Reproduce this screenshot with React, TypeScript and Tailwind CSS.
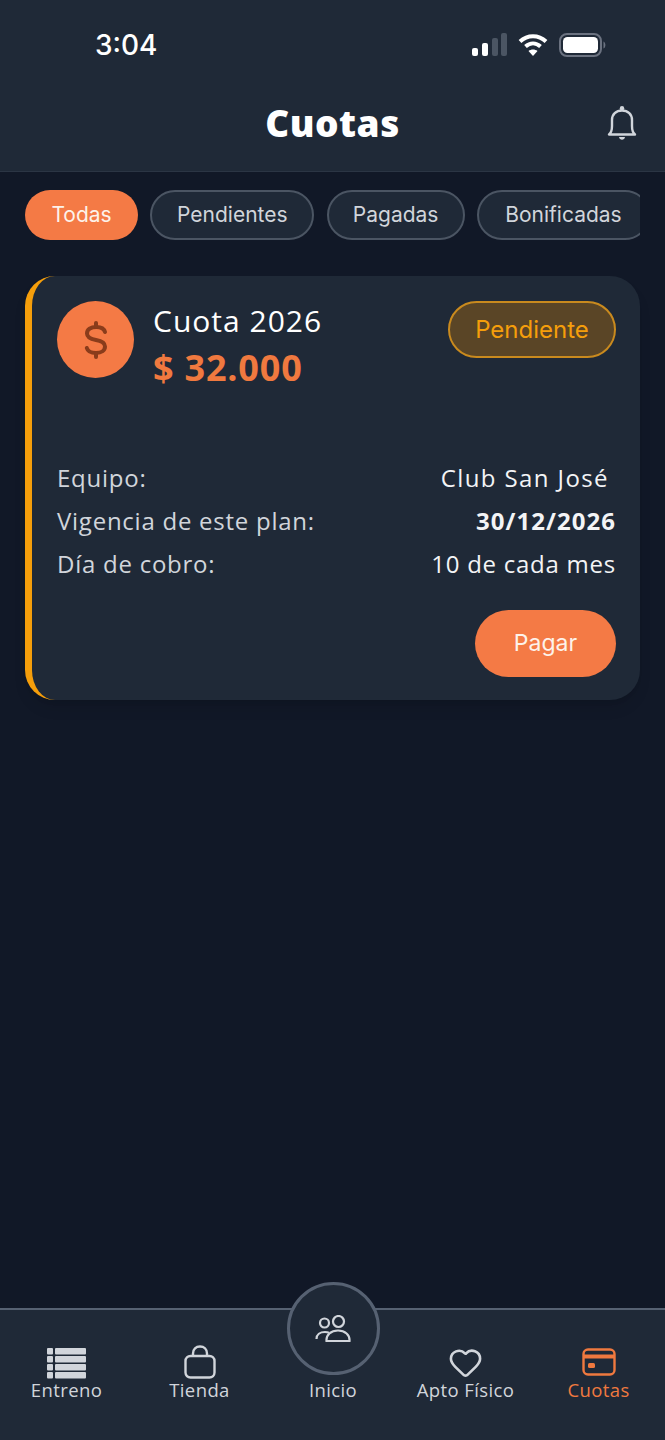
import { Heart } from "lucide-react";

const filters = [
  { label: "Todas", active: true, width: "w-[113px]" },
  { label: "Pendientes", active: false, width: "w-[164px]" },
  { label: "Pagadas", active: false, width: "w-[138px]" },
  { label: "Bonificadas", active: false, width: "w-[173px]" },
];

function SignalIcon() {
  return (
    <svg width="36" height="24" viewBox="0 0 36 24">
      <rect x="1" y="15" width="6" height="8" rx="2" fill="#fff" />
      <rect x="11" y="10" width="6" height="13" rx="2" fill="#fff" />
      <rect x="21" y="5" width="6" height="18" rx="2" fill="#4b5563" />
      <rect x="30" y="0" width="6" height="23" rx="2" fill="#4b5563" />
    </svg>
  );
}

function WifiIcon() {
  return (
    <svg width="30" height="24" viewBox="0 0 30 24" fill="none" stroke="#fff" strokeWidth="4">
      <path d="M2 8.5 C9.5 1.5 20.5 1.5 28 8.5" />
      <path d="M7.5 13.5 C12 9.5 18 9.5 22.5 13.5" />
      <path d="M15 23 L10.5 18 C13 16 17 16 19.5 18 Z" fill="#fff" stroke="none" />
    </svg>
  );
}

function BatteryIcon() {
  return (
    <svg width="48" height="24" viewBox="0 0 48 24" fill="none">
      <rect x="1" y="1" width="41" height="22" rx="7" stroke="#6b7280" strokeWidth="2" />
      <rect x="4" y="4" width="35" height="16" rx="4.5" fill="#fff" />
      <path d="M44.5 8.5 C47 9.5 47 14.5 44.5 15.5 Z" fill="#6b7280" />
    </svg>
  );
}

function BellIcon() {
  return (
    <svg width="30" height="36" viewBox="0 0 30 36" fill="none" stroke="#d1d5db" strokeWidth="2.4" strokeLinejoin="round">
      <path d="M2 29.5 H28 C25.5 27.5 25 25 25 21 V15 C25 9.5 21 5.5 15 5.5 C9 5.5 5 9.5 5 15 V21 C5 25 4.5 27.5 2 29.5 Z" />
      <circle cx="15" cy="3.2" r="2.2" fill="#d1d5db" stroke="none" />
      <path d="M12 32 H18 C17.5 35.5 12.5 35.5 12 32 Z" fill="#d1d5db" stroke="none" />
    </svg>
  );
}

function DollarIcon() {
  return (
    <svg width="24" height="38" viewBox="0 0 24 38" fill="none" stroke="#8a3c1b" strokeWidth="4" strokeLinecap="round">
      <path d="M21 11 C20 7.5 17 6 12.5 6 C6.5 6 3 8.5 3 12.5 C3 16.5 6.5 18 12 19 C17.5 20 21 21.5 21 25.5 C21 29.5 17.5 32 12 32 C7 32 3.8 30.5 2.8 27" />
      <path d="M12 2 V6" />
      <path d="M12 32 V36" />
    </svg>
  );
}

function ListIcon() {
  return (
    <svg width="40" height="31" viewBox="0 0 40 31" fill="#d1d5db">
      <rect x="0" y="0" width="6" height="6.5" rx="1" />
      <rect x="8" y="0" width="31" height="6.5" rx="1" />
      <rect x="0" y="8" width="6" height="6.5" rx="1" />
      <rect x="8" y="8" width="31" height="6.5" rx="1" />
      <rect x="0" y="16" width="6" height="6.5" rx="1" />
      <rect x="8" y="16" width="31" height="6.5" rx="1" />
      <rect x="0" y="24" width="6" height="6.5" rx="1" />
      <rect x="8" y="24" width="31" height="6.5" rx="1" />
    </svg>
  );
}

function BagIcon() {
  return (
    <svg width="32" height="34" viewBox="0 0 32 34" fill="none" stroke="#d1d5db" strokeWidth="2.4">
      <rect x="1.5" y="11" width="29" height="21.5" rx="5" />
      <path d="M9 11 V8.5 C9 4 12 1.5 16 1.5 C20 1.5 23 4 23 8.5 V11" />
    </svg>
  );
}

function CardIcon() {
  return (
    <svg className="mb-[3px]" width="34" height="28" viewBox="0 0 34 28" fill="none" stroke="#f0793f" strokeWidth="2.4">
      <rect x="1.5" y="1.5" width="31" height="25" rx="4.5" />
      <path d="M1.5 8.5 H32.5" strokeWidth="4" />
      <rect x="6" y="15" width="7" height="5" rx="1.5" fill="#f0793f" stroke="none" />
    </svg>
  );
}

function UsersIcon() {
  return (
    <svg width="36" height="28" viewBox="0 0 36 28" fill="none" stroke="#d1d5db" strokeWidth="2.2">
      <circle cx="9.5" cy="8" r="4.5" />
      <circle cx="23.5" cy="6.5" r="5.5" />
      <path d="M1.5 24 C1.5 19.5 5 17 10 17 C11.5 17 13 17.3 14 17.8" />
      <path d="M11.5 26 H34.5 C35 20 30 15.5 23 15.5 C16 15.5 11 20 11.5 26 Z" />
    </svg>
  );
}

function NavItem({ label, icon, active }: { label: string; icon: React.ReactNode; active?: boolean }) {
  return (
    <div className="flex flex-col items-center">
      <div className="h-[39px] flex items-end justify-center">{icon}</div>
      <span className={`text-[18.5px] tracking-[0.4px] leading-6 -mt-[1px] ${active ? "text-[#f0793f]" : "text-[#d1d5db]"}`}>
        {label}
      </span>
    </div>
  );
}

function InfoRow({ label, value, bold, className }: { label: string; value: string; bold?: boolean; className?: string }) {
  return (
    <div className="flex justify-between items-center h-[43px] text-[24px] tracking-[0.75px]">
      <span className="text-[#d1d5db]">{label}</span>
      <span className={`text-[#f3f4f6] ${bold ? "font-bold" : ""} ${className ?? ""}`}>{value}</span>
    </div>
  );
}

export default function App() {
  return (
    <div className="w-[665px] h-[1440px] flex flex-col bg-[#111827] overflow-hidden font-['Open_Sans',sans-serif]">
      <header className="bg-[#1f2937] h-[172px] shrink-0 border-b border-[#2b3544]">
        <div className="h-[90px] flex items-center justify-between pl-[95px] pr-[58px]">
          <span className="text-white text-[28px] font-medium font-['Inter',sans-serif]">3:04</span>
          <div className="flex items-center gap-[11px]">
            <SignalIcon />
            <WifiIcon />
            <BatteryIcon />
          </div>
        </div>
        <div className="relative flex items-center justify-center h-[66px]">
          <h1 className="text-white text-[37px] tracking-[0.5px] font-extrabold">Cuotas</h1>
          <div className="absolute right-[28px] top-[15px]">
            <BellIcon />
          </div>
        </div>
      </header>

      <div className="mx-[25px] mt-[18px] flex gap-[12.33px] overflow-hidden font-['Inter',sans-serif]">
        {filters.map((f) => (
          <div
            key={f.label}
            className={`${f.width} h-[50px] shrink-0 rounded-full flex items-center justify-center text-[21px] ${
              f.active
                ? "bg-[#f47a45] text-[#fdf2ea]"
                : "bg-[#1f2937] border-2 border-[#4b5563] text-[#d1d5db]"
            }`}
          >
            {f.label}
          </div>
        ))}
      </div>

      <section className="mx-[25px] mt-[36px] h-[424px] rounded-[30px] bg-[#1f2937] border-l-[7px] border-[#f59e0b] pl-[25px] pr-[24px] pt-[25px] shadow-lg">
        <div className="flex justify-between items-start">
          <div className="flex gap-[19px]">
            <div className="w-[77px] h-[77px] rounded-full bg-[#f47a45] flex items-center justify-center">
              <DollarIcon />
            </div>
            <div>
              <div className="text-white text-[30px] tracking-[1px] leading-[40px]">Cuota 2026</div>
              <div className="text-[#f0793f] text-[36px] tracking-[0.8px] font-bold leading-[54px]">$ 32.000</div>
            </div>
          </div>
          <div className="w-[168px] h-[57px] rounded-full border-2 border-[#c98a1e] bg-[#5a4526] flex items-center justify-center text-[#f59e0b] text-[24px] font-['Inter',sans-serif]">
            Pendiente
          </div>
        </div>
        <div className="mt-[61px]">
          <InfoRow label="Equipo:" value="Club San José" className="mr-[7px] tracking-[1.4px]" />
          <InfoRow label="Vigencia de este plan:" value="30/12/2026" bold className="tracking-[1.05px]" />
          <InfoRow label="Día de cobro:" value="10 de cada mes" />
        </div>
        <div className="flex justify-end mt-[25px]">
          <button className="w-[141px] h-[67px] rounded-full bg-[#f47a45] text-[#fdf2ea] text-[23px] font-['Inter',sans-serif]">
            Pagar
          </button>
        </div>
      </section>

      <div className="flex-1" />

      <nav className="relative h-[132px] shrink-0 bg-[#1f2937] border-t-2 border-[#566172] grid grid-cols-5 pt-[30px]">
        <NavItem label="Entreno" icon={<ListIcon />} />
        <NavItem label="Tienda" icon={<BagIcon />} />
        <div className="flex flex-col items-center -mt-[58px] relative left-[0.5px]">
          <div className="w-[93px] h-[93px] rounded-full bg-[#1f2937] border-[3px] border-[#566172] flex items-center justify-center">
            <UsersIcon />
          </div>
          <span className="text-[#d1d5db] text-[18.5px] tracking-[0.4px] leading-6 mt-[3px]">Inicio</span>
        </div>
        <NavItem
          label="Apto Físico"
          icon={<Heart className="-mb-[1px]" size={35} color="#d1d5db" strokeWidth={1.8} />}
        />
        <NavItem label="Cuotas" icon={<CardIcon />} active />
      </nav>
    </div>
  );
}
